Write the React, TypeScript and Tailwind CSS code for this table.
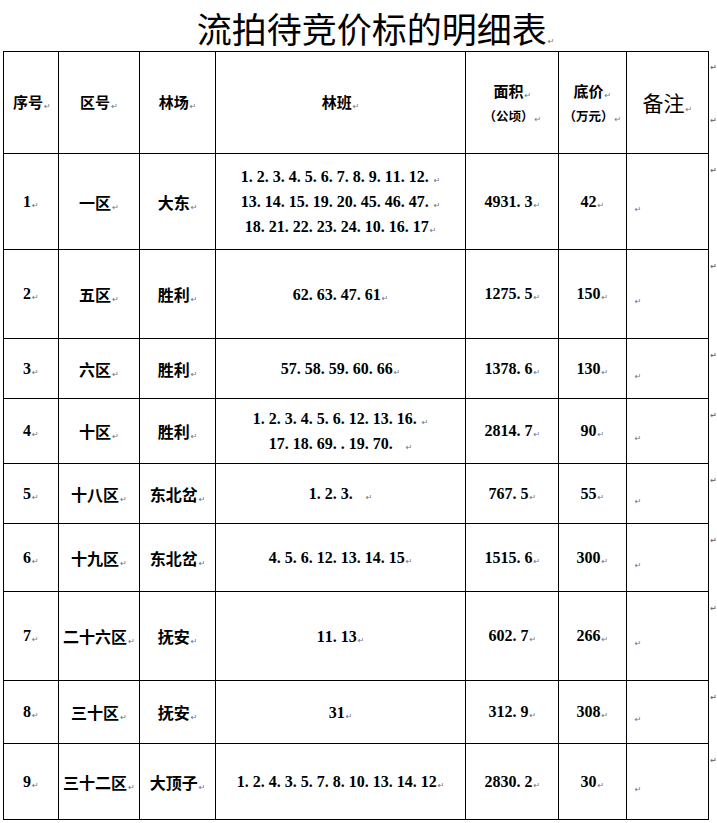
const CJK = "font-['Noto_Sans_CJK_SC',sans-serif]";
const NUM = "font-['Liberation_Serif','Noto_Sans_CJK_SC',serif]";

type Row = {
  no: string;
  zone: string;
  farm: string;
  lots: string[];
  area: string;
  price: string;
  h: string;
};

const ROWS: Row[] = [
  {
    no: '1',
    zone: '一区',
    farm: '大东',
    lots: ['1.2.3.4.5.6.7.8.9.11.12.', '13.14.15.19.20.45.46.47.', '18.21.22.23.24.10.16.17'],
    area: '4931.3',
    price: '42',
    h: 'h-[96px]',
  },
  { no: '2', zone: '五区', farm: '胜利', lots: ['62.63.47.61'], area: '1275.5', price: '150', h: 'h-[89px]' },
  { no: '3', zone: '六区', farm: '胜利', lots: ['57.58.59.60.66'], area: '1378.6', price: '130', h: 'h-[60px]' },
  {
    no: '4',
    zone: '十区',
    farm: '胜利',
    lots: ['1.2.3.4.5.6.12.13.16.', '17.18.69..19.70. '],
    area: '2814.7',
    price: '90',
    h: 'h-[65px]',
  },
  { no: '5', zone: '十八区', farm: '东北岔', lots: ['1.2.3. '], area: '767.5', price: '55', h: 'h-[60px]' },
  { no: '6', zone: '十九区', farm: '东北岔', lots: ['4.5.6.12.13.14.15'], area: '1515.6', price: '300', h: 'h-[68px]' },
  { no: '7', zone: '二十六区', farm: '抚安', lots: ['11.13'], area: '602.7', price: '266', h: 'h-[89px]' },
  { no: '8', zone: '三十区', farm: '抚安', lots: ['31'], area: '312.9', price: '308', h: 'h-[63px]' },
  { no: '9', zone: '三十二区', farm: '大顶子', lots: ['1.2.4.3.5.7.8.10.13.14.12'], area: '2830.2', price: '30', h: 'h-[76px]' },
];

function Mark() {
  return (
    <span className="ml-[1px] align-[-1px] font-['DejaVu_Sans',sans-serif] text-[8px] leading-none font-normal text-gray-500">
      ↵
    </span>
  );
}

// half-width digits on an 8px grid, like the document's Song font
function Mono({ text }: { text: string }) {
  return (
    <>
      {[...text].map((c, i) => (
        <span key={i} className="inline-block w-[8px] text-left">
          {c === ' ' ? '\u00a0' : c}
        </span>
      ))}
    </>
  );
}

function Cell({ children, className = '' }: { children?: React.ReactNode; className?: string }) {
  return <td className={`border border-black p-0 text-center align-middle ${className}`}>{children}</td>;
}

function EdgeMark({ second }: { second?: boolean }) {
  return (
    <td className="w-[6px] overflow-hidden p-0 align-top">
      <div className="h-full overflow-hidden pl-[1px] pt-[4px] leading-none">
        <span className="font-['DejaVu_Sans',sans-serif] text-[8px] text-gray-500">↵</span>
        {second && (
          <div className="mt-[45px] font-['DejaVu_Sans',sans-serif] text-[8px] text-gray-500">↵</div>
        )}
      </div>
    </td>
  );
}

export default function App() {
  return (
    <div className={`w-[717px] bg-white text-black ${CJK}`}>
      <div className="flex h-[51px] items-center justify-center pl-[34px] pt-[4px]">
        <span className="text-[35px] leading-none">
          流拍待竞价标的明细表
          <Mark />
        </span>
      </div>

      <table className="ml-[3px] table-fixed border-collapse">
        <colgroup>
          <col className="w-[55px]" />
          <col className="w-[82px]" />
          <col className="w-[76px]" />
          <col className="w-[251px]" />
          <col className="w-[93px]" />
          <col className="w-[68px]" />
          <col className="w-[83px]" />
          <col className="w-[6px]" />
        </colgroup>
        <tbody>
          <tr className="h-[102px] text-[15px] font-bold">
            <Cell className="pl-[2px]">
              序号
              <Mark />
            </Cell>
            <Cell>
              区号
              <Mark />
            </Cell>
            <Cell>
              林场
              <Mark />
            </Cell>
            <Cell>
              林班
              <Mark />
            </Cell>
            <Cell className="leading-[25px]">
              <div>
                面积
                <Mark />
              </div>
              <div className="text-[12.5px]">
                （公顷）
                <Mark />
              </div>
            </Cell>
            <Cell className="leading-[25px]">
              <div>
                底价
                <Mark />
              </div>
              <div className="text-[12.5px]">
                （万元）
                <Mark />
              </div>
            </Cell>
            <Cell className="text-[21px] font-normal">
              备注
              <Mark />
            </Cell>
            <EdgeMark second />
          </tr>

          {ROWS.map((r) => (
            <tr key={r.no} className={`${r.h} text-[16px] font-bold`}>
              <Cell className={NUM}>
                <Mono text={r.no} />
                <Mark />
              </Cell>
              <Cell>
                {r.zone}
                <Mark />
              </Cell>
              <Cell>
                {r.farm}
                <Mark />
              </Cell>
              <Cell className={`${NUM} leading-[25px]`}>
                {r.lots.map((l) => (
                  <div key={l} className="whitespace-nowrap">
                    <Mono text={l} />
                    <Mark />
                  </div>
                ))}
              </Cell>
              <Cell className={NUM}>
                <Mono text={r.area} />
                <Mark />
              </Cell>
              <Cell className={NUM}>
                <Mono text={r.price} />
                <Mark />
              </Cell>
              <Cell className="pl-[7px] pt-[4px] text-left">
                <Mark />
              </Cell>
              <EdgeMark />
            </tr>
          ))}
        </tbody>
      </table>
    </div>
  );
}
